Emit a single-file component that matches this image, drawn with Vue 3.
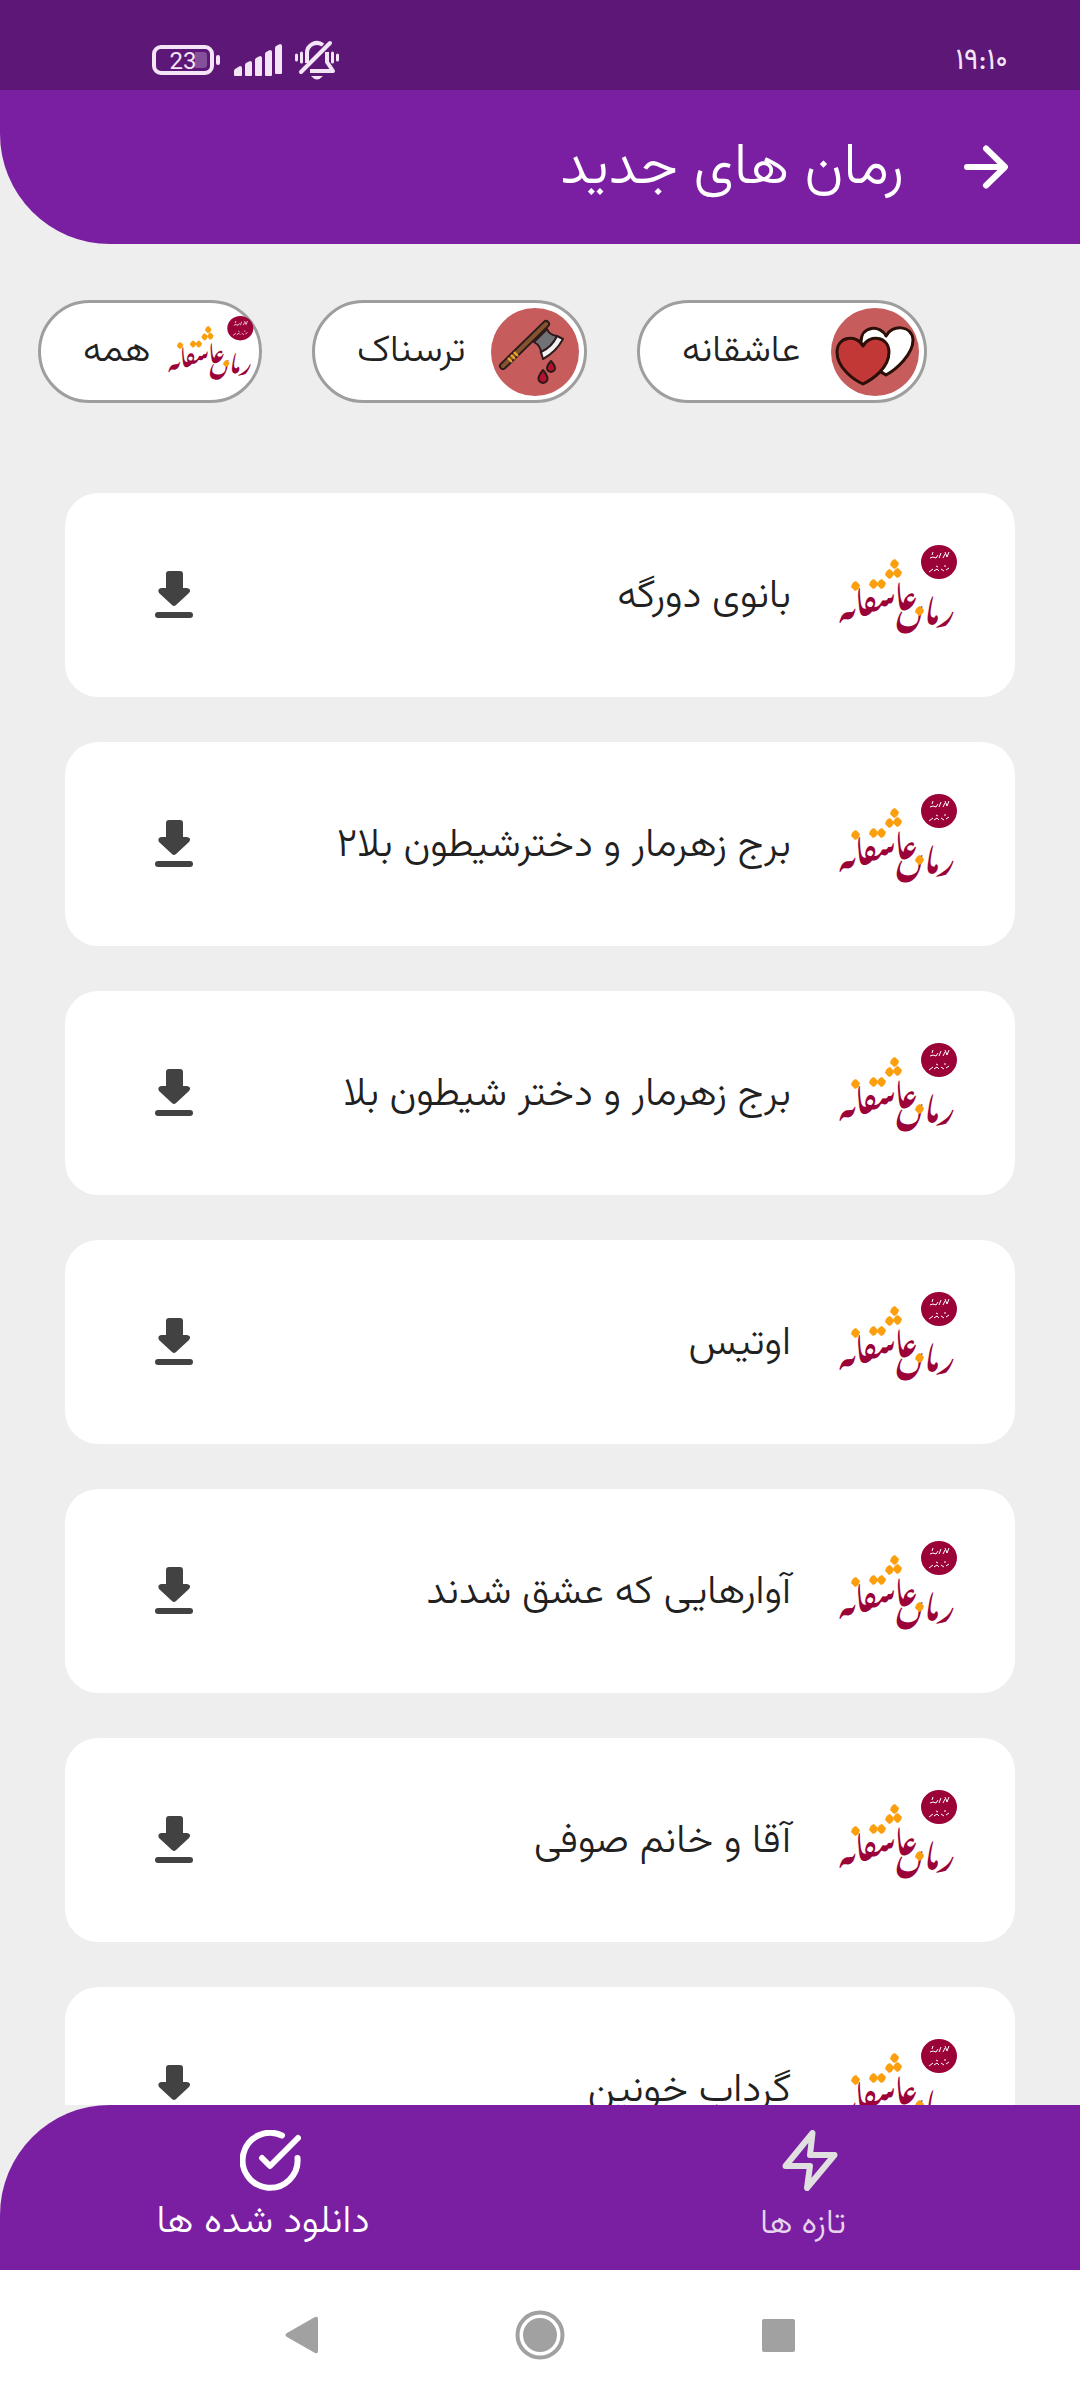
<template>
  <div class="app" dir="rtl" lang="fa">
    <div class="status">
      <time class="clock">۱۹:۱۰</time>
      <div class="status-icons" dir="ltr">
        <svg width="69" height="30" viewBox="0 0 69 30">
          <rect x="2" y="2" width="58" height="26" rx="7" fill="none" stroke="#f3e5f5" stroke-width="4" />
          <path d="M43 7h9q3 0 3 3v10q0 3-3 3h-9z" fill="#844f9b" />
          <rect x="64" y="10" width="4" height="10" rx="2" fill="#f3e5f5" />
          <text x="31" y="24" text-anchor="middle" class="battery-num">23</text>
        </svg>
        <svg width="48" height="32" viewBox="0 0 48 32" fill="#f3e5f5">
          <path d="M0 31v-4q0-1 1-2l5-3q2 0 2 2v7q0 1-1 1h-6q-1 0-1-1z" />
          <path d="M11 31v-10q0-1 1-2l4-2q2 0 2 2v12q0 1-1 1h-5q-1 0-1-1z" />
          <path d="M21 31v-15q0-1 1-2l4-2q2 0 2 2v17q0 1-1 1h-5q-1 0-1-1z" />
          <path d="M31 31v-21q0-1 1-2l4-2q2 0 2 2v23q0 1-1 1h-5q-1 0-1-1z" />
          <path d="M41 31v-27q0-1 1-2l4-2q2 0 2 2v27q0 1-1 1h-5q-1 0-1-1z" />
        </svg>
        <svg width="44" height="40" viewBox="0 0 44 40" fill="none" stroke="#f3e5f5" stroke-linecap="round">
          <path d="M12 23V13a10 10 0 0 1 16-8" stroke-width="4" stroke-linecap="butt" />
          <path d="M32 12v10l6 9H15" stroke-width="4" stroke-linejoin="round" stroke-linecap="butt" />
          <path d="M35 3L6 32" stroke-width="4" />
          <path d="M16 36h12q-6 7-12 0z" fill="#f3e5f5" stroke="none" />
          <path d="M1.5 15v5M6.500 13v9M37.500 13v9M42.500 15v5" stroke-width="3" />
        </svg>
      </div>
    </div>

    <header class="header">
      <button class="back" aria-label="بازگشت">
        <svg width="44" height="44" viewBox="0 0 44 44" fill="none" stroke="#fff" stroke-width="6" stroke-linecap="round" stroke-linejoin="round">
          <path d="M3 22h37M22 3.500L41 22L22 40.500" />
        </svg>
      </button>
      <h1>رمان های جدید</h1>
    </header>

    <!-- لوگو یک بار تعریف می شود و همه جا استفاده می شود -->
    <svg class="defs" aria-hidden="true">
      <symbol id="logo" viewBox="0 0 122 102">
        <ellipse cx="103" cy="18" rx="18" ry="17" fill="#9b0238" />
        <path d="M94 14l3-1 3 1 2-3M103 14l2-5M107 14l2-4M109 8l2 5 2-5M96 11l1-3M93 28l4-3M98 27l3-2 2 2M105 25l3 2M110 26l3-2M100 22l2 1M108 22l2 0" fill="none" stroke="#fff" stroke-width="1" />
        <g fill="#9b0238">
          <text x="43" y="70" text-anchor="middle" transform="rotate(-8 43 70)" class="logo-text">عاسٯاٮه</text>
          <text x="89" y="80" text-anchor="middle" transform="rotate(6 89 80)" class="logo-text">رماں</text>
        </g>
        <path v-for="d in dots" :key="d.join()" :d="`M${d[0] + 1} ${d[1] - 5}l4 4q-1 5-5 6l-4-4q1-5 5-6z`" fill="#fb9f0f" />
      </symbol>
    </svg>

    <main class="content">
      <nav class="chips" dir="ltr">
        <button v-for="c in chips" :key="c.name" class="chip">
          <span>{{ c.name }}</span>
          <svg v-if="c.icon === 'logo'" class="chip-icon"><use href="#logo" /></svg>
          <svg v-else-if="c.icon === 'axe'" class="chip-icon" viewBox="0 0 88 88">
            <circle cx="44" cy="44" r="44" fill="#c75c5c" />
            <g stroke="#2e1a1a" stroke-width="2" stroke-linejoin="round">
              <path d="M43 34L56 21Q58 27 66 28Q62 39 50 45Q50 38 43 34z" fill="#717276" />
              <path d="M66 28L72 31Q65 44 52 51L50 44Q61 39 66 28z" fill="#f2f2f2" />
              <path d="M52 62q-9 11 0 13q9-2 0-13z" fill="#b5112c" />
              <path d="M60 53q-8 9 0 11q8-2 0-11z" fill="#b5112c" />
            </g>
            <g stroke-linecap="round">
              <path d="M12 58L55 16" stroke="#2e1a1a" stroke-width="8" />
              <path d="M12 58L55 16" stroke="#82552f" stroke-width="4" />
            </g>
            <path d="M17 50l4 4M20 47l4 4M23 44l4 4" stroke="#f0a92c" stroke-width="2" />
          </svg>
          <svg v-else class="chip-icon" viewBox="0 0 88 88">
            <circle cx="44" cy="44" r="44" fill="#c75c5c" />
            <g stroke="#2b0f08" stroke-width="3" stroke-linejoin="round">
              <path d="M55 28C50 17 30 17 30 34C30 50 46 62 55 67C66 61 82 46 82 32C81 17 61 16 55 28z" fill="#fff" />
              <path d="M32 38C26 26 6 28 6 44C6 60 23 72 32 76C42 71 58 60 58 44C58 28 38 26 32 38z" fill="#c23836" />
            </g>
          </svg>
        </button>
      </nav>

      <ul class="list">
        <li v-for="n in novels" :key="n" class="card">
          <svg class="card-logo" role="img" aria-label="رمان عاشقانه"><use href="#logo" /></svg>
          <span class="name">{{ n }}</span>
          <button class="download" aria-label="دانلود">
            <svg width="38" height="48" viewBox="0 0 38 48" fill="#424242">
              <path d="M11 3q0-3 3-3h11q3 0 3 3v14h4q5 1 2 5L21 34q-2 2-4 0L4 22q-2-4 2-5h5z" />
              <rect y="41" width="38" height="6" rx="3" />
            </svg>
          </button>
        </li>
      </ul>
    </main>

    <nav class="tabs">
      <a href="#new" class="tab">
        <svg width="60" height="61" viewBox="0 0 60 61" fill="none" stroke="#e0e0e0" stroke-width="6" stroke-linecap="round" stroke-linejoin="round">
          <path d="M32.500 3L30 25H54.500L27 58L30 36H5.500z" />
        </svg>
        <span>تازه ها</span>
      </a>
      <a href="#downloads" class="tab active">
        <svg width="61" height="61" viewBox="0 0 61 61" fill="none" stroke="#fff" stroke-width="6" stroke-linecap="round" stroke-linejoin="round">
          <path d="M57.500 28A27.500 27.500 0 1 1 42 5.500" />
          <path d="M22 28L30 36L58 8" />
        </svg>
        <span>دانلود شده ها</span>
      </a>
    </nav>

    <div class="navbar">
      <button aria-label="برنامه های اخیر">
        <svg width="50" height="50" viewBox="0 0 50 50"><rect x="9" y="9" width="33" height="33" rx="2" fill="#a1a1a1" /></svg>
      </button>
      <button aria-label="خانه">
        <svg width="50" height="50" viewBox="0 0 50 50">
          <circle cx="25" cy="25" r="22.500" fill="none" stroke="#a1a1a1" stroke-width="4" />
          <circle cx="25" cy="25" r="17" fill="#a1a1a1" />
        </svg>
      </button>
      <button aria-label="برگشت">
        <svg width="50" height="50" viewBox="0 0 50 50"><path d="M10 23L38 7q3-1 3 2v32q0 3-3 2L10 27q-3-2 0-4z" fill="#a1a1a1" /></svg>
      </button>
    </div>
  </div>
</template>

<script setup>
const chips = [
  { name: 'همه', icon: 'logo' },
  { name: 'ترسناک', icon: 'axe' },
  { name: 'عاشقانه', icon: 'hearts' }
]

const novels = [
  'بانوی دورگه',
  'برج زهرمار و دخترشیطون بلا۲',
  'برج زهرمار و دختر شیطون بلا',
  'اوتیس',
  'آوارهایی که عشق شدند',
  'آقا و خانم صوفی',
  'گرداب خونین'
]

// نقطه های نارنجی لوگو
const dots = [[19, 42], [37, 40], [45, 40], [53, 30], [61, 29], [58, 20], [83, 67]]
</script>

<style>
body {
  margin: 0;
  background: #eee;
}
</style>

<style scoped>
.app {
  display: flex;
  flex-direction: column;
  height: 100vh;
  overflow: hidden;
  background: #eee;
  color: #212121;
  font-family: Vazirmatn, "Noto Sans Arabic", "DejaVu Sans", sans-serif;
  font-weight: 300;
}
button {
  padding: 0;
  border: 0;
  background: none;
  color: inherit;
  font: inherit;
}
svg {
  display: block;
  flex: none;
}
.defs {
  position: absolute;
  width: 0;
  height: 0;
}
.status {
  flex: none;
  display: flex;
  justify-content: space-between;
  align-items: center;
  box-sizing: border-box;
  height: 90px;
  padding: 30px 72px 0 152px;
  background: #5c1777;
}
.clock {
  padding-top: 4px;
  color: #f3e5f5;
  font-size: 30px;
  font-weight: 400;
  line-height: 40px;
}
.status-icons {
  display: flex;
  align-items: center;
  gap: 13px;
}
.battery-num {
  font-family: Roboto, sans-serif;
  font-size: 24px;
  font-weight: 400;
  fill: #f3e5f5;
}
.header {
  flex: none;
  display: flex;
  align-items: center;
  gap: 60px;
  height: 154px;
  padding: 0 72px;
  border-bottom-left-radius: 110px;
  background: #7b1fa2;
  color: #fff;
}
.header h1 {
  margin: 0;
  padding-top: 4px;
  font-size: 58px;
  font-weight: 300;
  line-height: 80px;
}
.content {
  flex: 1;
  min-height: 0;
  overflow: hidden;
  padding: 56px 65px 0;
}
.chips {
  display: grid;
  grid-template-columns: 224px 275px 290px;
  gap: 50px;
  margin: 0 -27px 90px;
}
.chip {
  display: flex;
  align-items: center;
  justify-content: space-between;
  height: 103px;
  padding: 0 5px 0 42px;
  border: 3px solid #9e9e9e;
  border-radius: 52px;
  background: #fff;
  font-size: 38px;
  line-height: 60px;
  box-sizing: border-box;
}
.chip-icon {
  width: 88px;
  height: 88px;
}
.list {
  display: flex;
  flex-direction: column;
  gap: 45px;
  margin: 0;
  padding: 0;
  list-style: none;
}
.card {
  display: flex;
  align-items: center;
  height: 204px;
  padding: 0 57px 0 90px;
  border-radius: 33px;
  background: #fff;
  box-sizing: border-box;
}
.card-logo {
  width: 122px;
  height: 102px;
}
.logo-text {
  font-family: "Noto Nastaliq Urdu", "Noto Naskh Arabic", "DejaVu Sans", serif;
  font-size: 31px;
  font-weight: 700;
}
.name {
  flex: 1;
  margin-right: 45px;
  padding-top: 4px;
  font-size: 40px;
  line-height: 60px;
}
.tabs {
  flex: none;
  display: flex;
  height: 165px;
  border-top-left-radius: 110px;
  background: #7b1fa2;
}
.tab {
  flex: 1;
  display: flex;
  flex-direction: column;
  align-items: center;
  padding-top: 25px;
  color: #e6d6ec;
  font-size: 34px;
  line-height: 68px;
  text-decoration: none;
}
.tab span {
  padding-right: 14px;
}
.tab.active {
  color: #fff;
  font-size: 39px;
  line-height: 64px;
}
.navbar {
  flex: none;
  display: flex;
  justify-content: center;
  align-items: center;
  gap: 188px;
  height: 130px;
  background: #fff;
}
</style>
